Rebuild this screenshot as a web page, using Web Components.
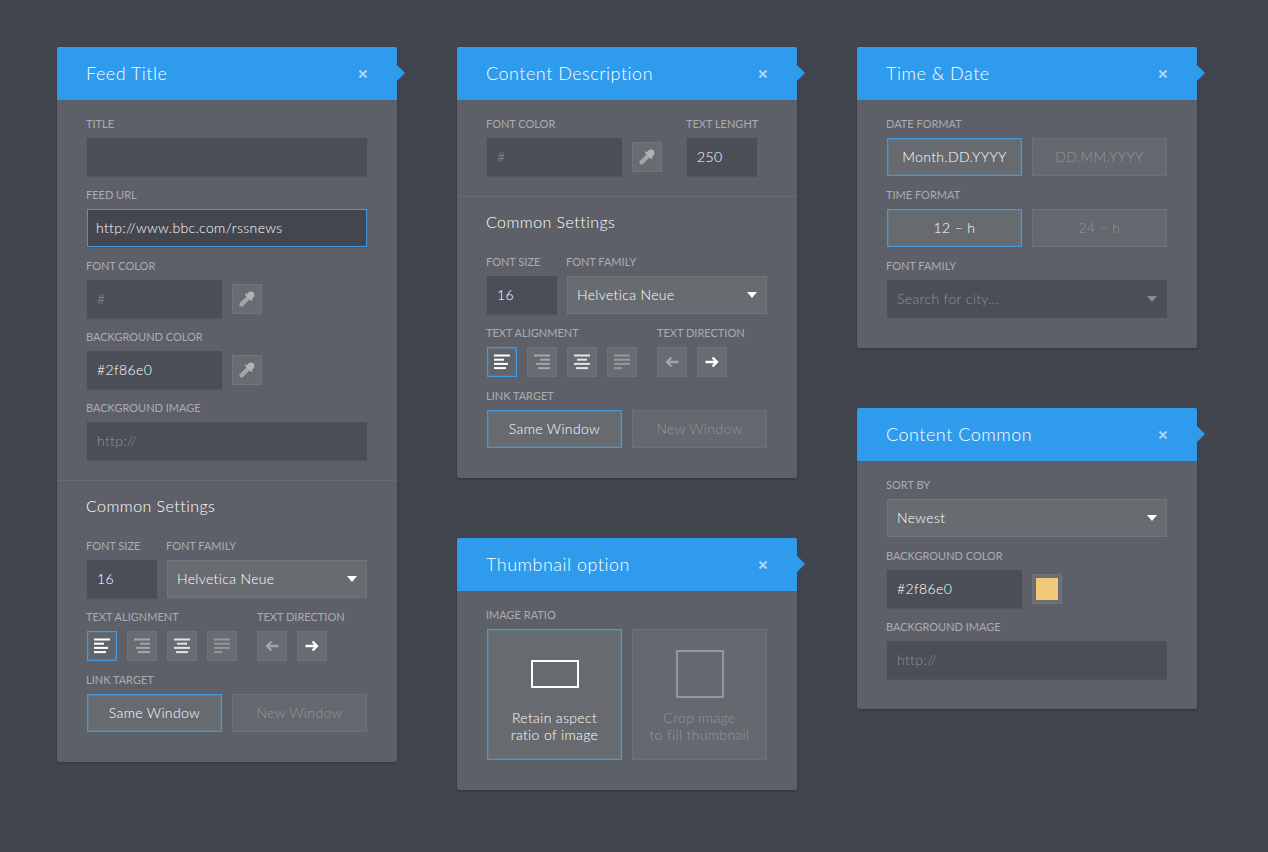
<!DOCTYPE html>
<html>
<head>
<meta charset="utf-8">
<title>Settings panels</title>
<style>
  html, body { margin: 0; height: 100%; background: #42454e; }
  body { font-family: "Lato", "Liberation Sans", sans-serif; color: #fff; }
  #page { display: flex; gap: 60px; padding: 47px 0 0 57px; }
  .column { display: flex; flex-direction: column; gap: 60px; width: 340px; align-items: stretch; }
</style>
</head>
<body>
<div id="page">
  <div class="column">
    <config-panel heading="Feed Title">
      <panel-section divided>
        <form-field label="Title"><text-box></text-box></form-field>
        <form-field label="Feed URL"><text-box focused value="http://www.bbc.com/rssnews"></text-box></form-field>
        <form-field label="Font Color"><field-row><text-box half placeholder="#"></text-box><picker-button></picker-button></field-row></form-field>
        <form-field label="Background Color"><field-row><text-box half value="#2f86e0"></text-box><picker-button></picker-button></field-row></form-field>
        <form-field label="Background Image"><text-box placeholder="http://"></text-box></form-field>
      </panel-section>
      <panel-section><common-settings></common-settings></panel-section>
    </config-panel>
  </div>
  <div class="column">
    <config-panel heading="Content Description">
      <panel-section divided>
        <field-row gap="25">
          <form-field label="Font Color"><field-row><text-box half placeholder="#"></text-box><picker-button></picker-button></field-row></form-field>
          <form-field label="Text Lenght"><text-box small value="250"></text-box></form-field>
        </field-row>
      </panel-section>
      <panel-section><common-settings></common-settings></panel-section>
    </config-panel>
    <config-panel heading="Thumbnail option">
      <panel-section>
        <form-field label="Image Ratio">
          <field-row>
            <ratio-tile selected shape="wide">Retain aspect<br>ratio of image</ratio-tile>
            <ratio-tile shape="square">Crop image<br>to fill thumbnail</ratio-tile>
          </field-row>
        </form-field>
      </panel-section>
    </config-panel>
  </div>
  <div class="column">
    <config-panel heading="Time &amp; Date">
      <panel-section>
        <form-field label="Date Format"><field-row><option-button selected>Month.DD.YYYY</option-button><option-button>DD.MM.YYYY</option-button></field-row></form-field>
        <form-field label="Time Format"><field-row><option-button selected>12 – h</option-button><option-button>24 – h</option-button></field-row></form-field>
        <form-field label="Font Family"><select-box dark wide>Search for city...</select-box></form-field>
      </panel-section>
    </config-panel>
    <config-panel heading="Content Common">
      <panel-section>
        <form-field label="Sort By"><select-box wide>Newest</select-box></form-field>
        <form-field label="Background Color"><field-row><text-box half value="#2f86e0"></text-box><picker-button swatch="#f2c879"></picker-button></field-row></form-field>
        <form-field label="Background Image"><text-box placeholder="http://"></text-box></form-field>
      </panel-section>
    </config-panel>
  </div>
</div>

<script>
const TEXT = `font-family: "Lato", "Liberation Sans", sans-serif;`;
const BLUE_EDGE = `border-color: #3f9ae0; box-shadow: inset 0 0 0 1px rgba(63,154,224,.28);`;

function shadow(el, html) {
  const root = el.attachShadow({ mode: "open" });
  root.innerHTML = html;
  return root;
}

class ConfigPanel extends HTMLElement {
  connectedCallback() {
    shadow(this, `
      <style>
        :host { display: block; background: #5d6068; border-radius: 2px; box-shadow: 0 1px 3px rgba(0,0,0,.25); }
        header {
          position: relative; display: flex; align-items: center; justify-content: space-between;
          height: 53px; padding: 0 29px; background: #2f9bec; border-radius: 2px 2px 0 0;
          ${TEXT} font-size: 18px; font-weight: 300; letter-spacing: .5px; color: #fff;
        }
        header span { margin-bottom: 2px; }
        header::after {
          content: ""; position: absolute; left: 100%; top: 18px;
          border-left: 8px solid #2f9bec; border-top: 8px solid transparent; border-bottom: 8px solid transparent;
        }
        svg { display: block; }
      </style>
      <header>
        <span>${this.getAttribute("heading").replace("&", "&amp;")}</span>
        <svg width="10" height="10" viewBox="0 0 10 10"><path d="M1.5 1.5l7 7M8.5 1.5l-7 7" stroke="#a9d6f7" stroke-width="2"/></svg>
      </header>
      <slot></slot>`);
  }
}

class PanelSection extends HTMLElement {
  connectedCallback() {
    shadow(this, `
      <style>
        :host { display: flex; flex-direction: column; gap: 12px; padding: 17px 30px 30px; }
        :host([divided]) { padding-bottom: 20px; border-bottom: 1px solid #686b73; }
      </style>
      <slot></slot>`);
  }
}

class FormField extends HTMLElement {
  connectedCallback() {
    shadow(this, `
      <style>
        :host { display: block; }
        label {
          display: block; height: 14px; line-height: 14px; margin: 0 0 7px -1px; white-space: nowrap;
          ${TEXT} font-size: 11px; text-transform: uppercase; color: #a9acb1;
        }
        :host([flush]) label { margin-left: 0; }
      </style>
      <label>${this.getAttribute("label")}</label>
      <slot></slot>`);
  }
}

class FieldRow extends HTMLElement {
  connectedCallback() {
    const gap = this.getAttribute("gap") || 10;
    shadow(this, `
      <style>:host { display: flex; align-items: center; gap: ${gap}px; }</style>
      <slot></slot>`);
  }
}

class TextBox extends HTMLElement {
  connectedCallback() {
    const value = this.getAttribute("value");
    shadow(this, `
      <style>
        :host {
          display: flex; align-items: center; box-sizing: border-box; height: 38px; width: 280px; padding: 0 10px;
          background: #4b4e57; box-shadow: 0 1px 1px rgba(0,0,0,.12);
          ${TEXT} font-size: 14px; font-weight: 300; letter-spacing: .35px; color: #fff;
        }
        :host([half]) { width: 135px; }
        :host([small]) { width: 70px; }
        :host([focused]) { background: #43464e; border: 1px solid #3f9ae0; padding: 0 8px; }
        span { margin-bottom: 2px; }
        .placeholder { color: #8e9197; }
      </style>
      <span class="${value ? "" : "placeholder"}">${value || this.getAttribute("placeholder") || ""}</span>`);
  }
}

const TILE_STYLE = `
  box-sizing: border-box; background: #65686e; border: 1px solid #6d7076; color: #94979c;
  ${TEXT} font-size: 14px; font-weight: 300; letter-spacing: .35px; text-align: center;
`;
const TILE_SELECTED = `background: #676b70; color: #fff; ${BLUE_EDGE}`;

class OptionButton extends HTMLElement {
  connectedCallback() {
    shadow(this, `
      <style>
        :host { display: flex; align-items: center; justify-content: center; width: 135px; height: 38px; padding-bottom: 2px; white-space: nowrap; ${TILE_STYLE} }
        :host([selected]) { ${TILE_SELECTED} }
      </style>
      <slot></slot>`);
  }
}

class RatioTile extends HTMLElement {
  connectedCallback() {
    const wide = this.getAttribute("shape") === "wide";
    shadow(this, `
      <style>
        :host { display: flex; flex-direction: column; align-items: center; width: 135px; height: 131px; padding-top: 20px; line-height: 17px; ${TILE_STYLE} }
        :host([selected]) { ${TILE_SELECTED} }
        .frame { display: flex; align-items: center; height: 48px; margin-bottom: 11px; }
        .shape { box-sizing: border-box; width: 48px; height: ${wide ? 28 : 48}px; border: 2px solid ${wide ? "#fff" : "#94979c"}; }
      </style>
      <div class="frame"><div class="shape"></div></div>
      <div><slot></slot></div>`);
  }
}

class SelectBox extends HTMLElement {
  connectedCallback() {
    shadow(this, `
      <style>
        :host {
          display: flex; align-items: center; justify-content: space-between; box-sizing: border-box; height: 38px; width: 200px;
          padding: 0 9px; background: #686c71; border: 1px solid #72757a; color: #fff;
          ${TEXT} font-size: 14px; font-weight: 300; letter-spacing: .35px;
        }
        :host([wide]) { width: 280px; }
        :host([dark]) { background: #4b4e57; border-color: #4b4e57; color: #8e9197; }
        span { margin-bottom: 2px; }
        i { border-top: 6px solid #fff; border-left: 5.5px solid transparent; border-right: 5.5px solid transparent; }
        :host([dark]) i { border-top-color: #8b8e94; }
      </style>
      <span><slot></slot></span><i></i>`);
  }
}

class PickerButton extends HTMLElement {
  connectedCallback() {
    const swatch = this.getAttribute("swatch");
    const inner = swatch
      ? `<b style="display:block;width:22px;height:22px;background:${swatch}"></b>`
      : `<svg width="18" height="18" viewBox="0 0 18 18">
           <path d="M3.6 14.4L10.2 7.8" stroke="#a3a6aa" stroke-width="4.4" stroke-linecap="round"/>
           <path d="M8.4 4.6L13.4 9.6" stroke="#b0b3b6" stroke-width="2.4" stroke-linecap="round"/>
           <circle cx="13" cy="5" r="3.4" fill="#b0b3b6"/>
         </svg>`;
    shadow(this, `
      <style>
        :host { display: flex; align-items: center; justify-content: center; box-sizing: border-box; width: 30px; height: 30px; background: #686c71; border: 1px solid #72757a; }
        :host([swatch]) { background: #6a6d74; }
      </style>
      ${inner}`);
  }
}

const BARS = {
  left: [[0, 16], [0, 10], [0, 14], [0, 12]],
  right: [[0, 16], [6, 10], [2, 14], [4, 12]],
  center: [[0, 16], [3, 10], [0, 16], [2, 12]],
  justify: [[0, 16], [0, 16], [0, 16], [0, 8]]
};

class IconButton extends HTMLElement {
  connectedCallback() {
    const icon = this.getAttribute("icon");
    const color = this.getAttribute("color") || "#a9acb0";
    let art;
    if (BARS[icon]) {
      art = BARS[icon].map(([x, w], i) => `<rect x="${x}" y="${0.5 + i * 4.2}" width="${w}" height="2" fill="${color}"/>`).join("");
    } else {
      const d = icon === "back" ? "M14.5 8H3M7.5 3.5L3 8l4.5 4.5" : "M1.5 8H13M8.5 3.5L13 8l-4.5 4.5";
      art = `<path d="${d}" fill="none" stroke="${color}" stroke-width="2.4"/>`;
    }
    shadow(this, `
      <style>
        :host { display: flex; align-items: center; justify-content: center; box-sizing: border-box; width: 30px; height: 30px; background: #686b71; border: 1px solid #6f7278; }
        :host([selected]) { background: #60646b; ${BLUE_EDGE} }
        svg { display: block; }
      </style>
      <svg width="16" height="16" viewBox="0 0 16 16">${art}</svg>`);
  }
}

class CommonSettings extends HTMLElement {
  connectedCallback() {
    shadow(this, `
      <style>
        :host { display: flex; flex-direction: column; gap: 12px; }
        h3 { margin: -1px 0 12px -1px; height: 18px; line-height: 18px; ${TEXT} font-size: 16px; font-weight: 300; letter-spacing: .45px; color: #fff; }
        .icons { display: flex; gap: 10px; }
      </style>
      <h3>Common Settings</h3>
      <field-row>
        <form-field label="Font Size"><text-box small value="16"></text-box></form-field>
        <form-field label="Font Family"><select-box>Helvetica Neue</select-box></form-field>
      </field-row>
      <field-row gap="20">
        <form-field label="Text Alignment">
          <div class="icons">
            <icon-button selected icon="left" color="#fff"></icon-button>
            <icon-button icon="right" color="#a3a6aa"></icon-button>
            <icon-button icon="center" color="#e2e4e6"></icon-button>
            <icon-button icon="justify" color="#94979c"></icon-button>
          </div>
        </form-field>
        <form-field label="Text Direction" flush>
          <div class="icons">
            <icon-button icon="back" color="#a0a3a8"></icon-button>
            <icon-button icon="forward" color="#fff"></icon-button>
          </div>
        </form-field>
      </field-row>
      <form-field label="Link Target">
        <field-row><option-button selected>Same Window</option-button><option-button>New Window</option-button></field-row>
      </form-field>`);
  }
}

customElements.define("config-panel", ConfigPanel);
customElements.define("panel-section", PanelSection);
customElements.define("form-field", FormField);
customElements.define("field-row", FieldRow);
customElements.define("text-box", TextBox);
customElements.define("option-button", OptionButton);
customElements.define("ratio-tile", RatioTile);
customElements.define("select-box", SelectBox);
customElements.define("picker-button", PickerButton);
customElements.define("icon-button", IconButton);
customElements.define("common-settings", CommonSettings);
</script>
</body>
</html>
